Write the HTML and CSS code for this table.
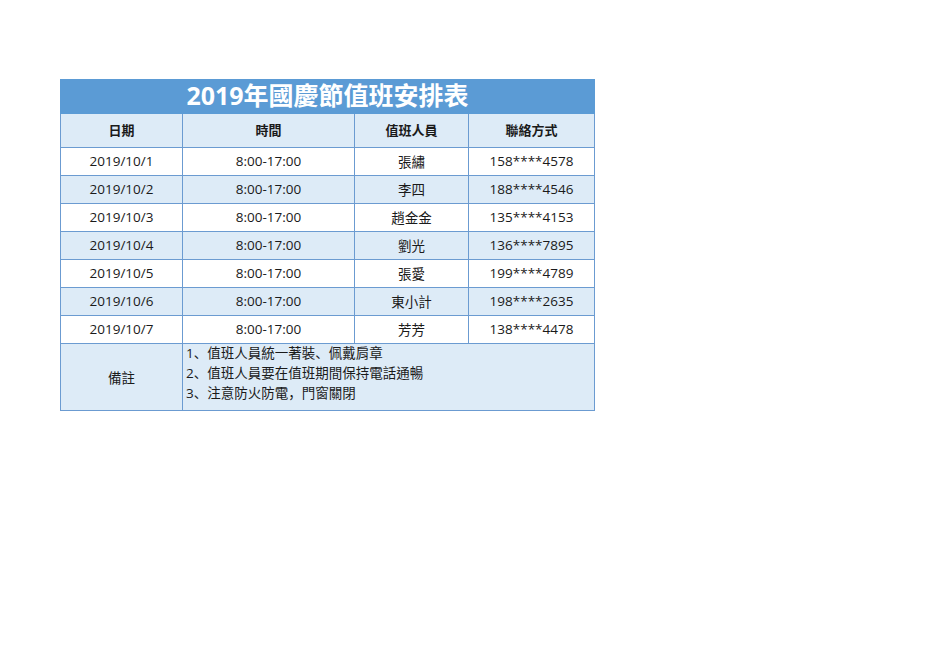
FILE: index.html
```html
<!DOCTYPE html>
<html lang="zh-Hant">
<head>
<meta charset="utf-8">
<title>2019年國慶節值班安排表</title>
<link rel="stylesheet" href="styles.css">
</head>
<body>
<div class="page">
<table class="duty">
  <colgroup>
    <col class="c-date"><col class="c-time"><col class="c-name"><col class="c-phone">
  </colgroup>
  <tr class="title-row"><td colspan="4">2019年國慶節值班安排表</td></tr>
  <tr class="head-row"><th>日期</th><th>時間</th><th>值班人員</th><th>聯絡方式</th></tr>
  <tr class="row"><td>2019/10/1</td><td>8:00-17:00</td><td>張繡</td><td>158****4578</td></tr>
  <tr class="row alt"><td>2019/10/2</td><td>8:00-17:00</td><td>李四</td><td>188****4546</td></tr>
  <tr class="row"><td>2019/10/3</td><td>8:00-17:00</td><td>趙金金</td><td>135****4153</td></tr>
  <tr class="row alt"><td>2019/10/4</td><td>8:00-17:00</td><td>劉光</td><td>136****7895</td></tr>
  <tr class="row"><td>2019/10/5</td><td>8:00-17:00</td><td>張愛</td><td>199****4789</td></tr>
  <tr class="row alt"><td>2019/10/6</td><td>8:00-17:00</td><td>東小計</td><td>198****2635</td></tr>
  <tr class="row"><td>2019/10/7</td><td>8:00-17:00</td><td>芳芳</td><td>138****4478</td></tr>
  <tr class="note-row">
    <td>備註</td>
    <td colspan="3" class="notes">
      <div>1<span class="p" lang="zh-Hans">、</span>值班人員統一著裝<span class="p" lang="zh-Hans">、</span>佩戴肩章</div>
      <div>2<span class="p" lang="zh-Hans">、</span>值班人員要在值班期間保持電話通暢</div>
      <div>3<span class="p" lang="zh-Hans">、</span>注意防火防電<span class="p" lang="zh-Hans">，</span>門窗關閉</div>
    </td>
  </tr>
</table>
</div>
</body>
</html>
```
FILE: styles.css
```css
html, body {
  margin: 0;
  padding: 0;
  background: #ffffff;
}
.page {
  padding: 79px 0 0 60px;
}
.duty {
  border-collapse: collapse;
  table-layout: fixed;
  width: 534px;
  font-family: "Open Sans", "Noto Sans CJK TC", sans-serif;
  font-size: 13.5px;
  color: #1a1a1a;
}
.c-date { width: 122px; }
.c-time { width: 172px; }
.c-name { width: 114px; }
.c-phone { width: 126px; }
.duty td, .duty th {
  border: 1px solid #6b9bd1;
  text-align: center;
  padding: 0;
}
.title-row td {
  background: #5b9bd5;
  border-color: #5b9bd5;
  color: #ffffff;
  font-size: 25px;
  font-weight: 700;
  height: 31px;
  line-height: 31px;
  padding-bottom: 2px;
}
.head-row th {
  background: #ddebf7;
  font-weight: 700;
  height: 31px;
  padding-bottom: 2px;
  font-size: 13px;
}
.row td {
  height: 25px;
  padding-bottom: 2px;
  background: #ffffff;
}
.row.alt td {
  background: #ddebf7;
}
.note-row td {
  background: #ddebf7;
  height: 66px;
}
.note-row td.notes {
  text-align: left;
  vertical-align: top;
  padding: 0 0 0 3px;
  line-height: 19px;
}
.notes div:first-child {
  margin-top: -1px;
}
.p {
  font-family: "Noto Sans CJK SC", sans-serif;
}
```
